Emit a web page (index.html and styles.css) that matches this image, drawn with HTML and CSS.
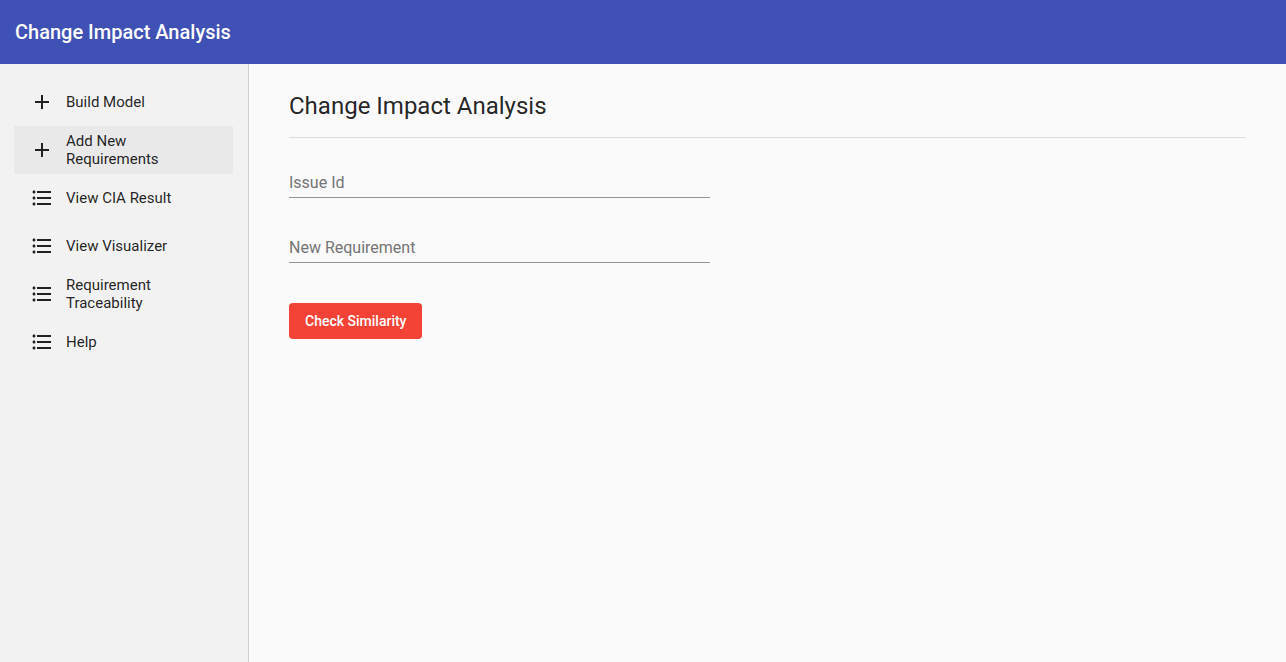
FILE: index.html
```html
<!DOCTYPE html>
<html lang="en">
<head>
<meta charset="utf-8">
<title>Change Impact Analysis</title>
<link rel="stylesheet" href="styles.css">
</head>
<body>
<svg class="symbols" aria-hidden="true">
  <symbol id="add" viewBox="0 0 24 24"><path d="M19 13h-6v6h-2v-6H5v-2h6V5h2v6h6v2z"/></symbol>
  <symbol id="list" viewBox="0 0 24 24"><path d="M4 10.5c-.83 0-1.5.67-1.5 1.5s.67 1.5 1.5 1.5 1.5-.67 1.5-1.5-.67-1.5-1.5-1.5zm0-6c-.83 0-1.5.67-1.5 1.5S3.17 7.5 4 7.5 5.5 6.83 5.5 6 4.83 4.5 4 4.500zm0 12c-.83 0-1.5.68-1.5 1.5s.68 1.5 1.5 1.5 1.5-.68 1.5-1.5-.67-1.5-1.5-1.5zM7 19h14v-2H7v2zm0-6h14v-2H7v2zm0-8v2h14V5H7z"/></symbol>
</svg>
<header class="toolbar">Change Impact Analysis</header>
<div class="layout">
  <nav class="sidebar">
    <a class="item"><svg class="icon"><use href="#add"/></svg><span class="label">Build Model</span></a>
    <a class="item active"><svg class="icon"><use href="#add"/></svg><span class="label">Add New Requirements</span></a>
    <a class="item"><svg class="icon"><use href="#list"/></svg><span class="label">View CIA Result</span></a>
    <a class="item"><svg class="icon"><use href="#list"/></svg><span class="label">View Visualizer</span></a>
    <a class="item"><svg class="icon"><use href="#list"/></svg><span class="label">Requirement Traceability</span></a>
    <a class="item"><svg class="icon"><use href="#list"/></svg><span class="label">Help</span></a>
  </nav>
  <main class="content">
    <h1 class="title">Change Impact Analysis</h1>
    <form class="form">
      <input class="field" type="text" placeholder="Issue Id">
      <input class="field" type="text" placeholder="New Requirement">
      <button class="submit" type="button">Check Similarity</button>
    </form>
  </main>
</div>
</body>
</html>
```
FILE: styles.css
```css
* { box-sizing: border-box; }
body {
  margin: 0;
  height: 100vh;
  display: flex;
  flex-direction: column;
  overflow: hidden;
  font-family: Roboto, sans-serif;
  color: rgba(0, 0, 0, .87);
  background: #fafafa;
}
.symbols { display: none; }
.toolbar {
  flex: none;
  height: 64px;
  padding: 0 15px;
  font-size: 20px;
  font-weight: 500;
  line-height: 64px;
  color: #fff;
  background: #3f51b5;
}
.layout { flex: 1; display: flex; }
.sidebar {
  flex: none;
  width: 249px;
  padding: 14px 15px 0 14px;
  border-right: 1px solid #d0d0d0;
  background: #f2f2f2;
}
.item {
  display: flex;
  align-items: center;
  height: 48px;
  padding: 0 16px;
}
.active { background: #e9e9e9; }
.icon { flex: none; width: 24px; height: 24px; fill: #212121; }
.label {
  width: 120px;
  margin-left: 12px;
  font-size: 15px;
  line-height: 18px;
}
.content { flex: 1; padding: 26px 40px 0; }
.title {
  margin: 0;
  height: 48px;
  border-bottom: 1px solid #dcdcdc;
  font-size: 24px;
  font-weight: 400;
  line-height: 32px;
}
.form {
  display: flex;
  flex-direction: column;
  align-items: flex-start;
  padding-top: 30px;
}
.field {
  width: 421px;
  height: 30px;
  margin-bottom: 35px;
  padding: 0;
  border: 0;
  border-bottom: 1px solid #949494;
  font: 400 16px/18px Roboto, sans-serif;
  background: transparent;
}
.field::placeholder { color: #757575; }
.submit {
  height: 36px;
  margin-top: 5px;
  padding: 0 16px;
  border: 0;
  border-radius: 4px;
  font: 500 14px/36px Roboto, sans-serif;
  color: #fff;
  background: #f44336;
}
```
